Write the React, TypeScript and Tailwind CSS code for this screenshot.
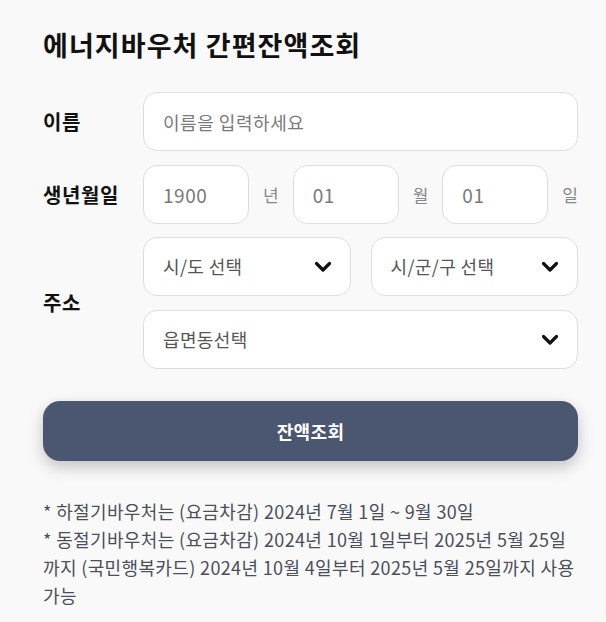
import { useState } from "react";

const FONT = { fontFamily: '"Noto Sans CJK KR", "Noto Sans", sans-serif' };

function Chevron() {
  return (
    <svg width="18" height="12" viewBox="0 0 18 12" className="shrink-0">
      <path d="M2.5 2.5 L9 9 L15.5 2.5" fill="none" stroke="#111" strokeWidth="3.2" strokeLinecap="round" strokeLinejoin="round" />
    </svg>
  );
}

function SelectBox({ label, className = "" }: { label: string; className?: string }) {
  return (
    <button
      type="button"
      className={`flex h-[59px] items-center justify-between rounded-[14px] border border-[#dedede] bg-white pl-[19px] pr-[18px] text-[18px] tracking-[0.02em] text-[#555] ${className}`}
    >
      <span>{label}</span>
      <Chevron />
    </button>
  );
}

export default function App() {
  const [name, setName] = useState("");
  const [year, setYear] = useState("");
  const [month, setMonth] = useState("");
  const [day, setDay] = useState("");

  const inputCls =
    "h-[59px] rounded-[14px] border border-[#dedede] bg-white px-[19px] text-[18px] tracking-[0.03em] text-[#333] placeholder:text-[#7a7a7a] outline-none";

  return (
    <div style={FONT} className="min-h-screen bg-[#f9f9f9] pl-[43px] pr-[28px] pt-[25px] pb-6">
      <h1 className="text-[27px] font-bold leading-[40px] tracking-[0.04em] text-[#111]">
        에너지바우처 간편잔액조회
      </h1>

      <div className="mt-[27px] flex flex-col">
        {/* 이름 */}
        <div className="flex items-center">
          <label className="w-[100px] shrink-0 text-[20px] font-bold tracking-[0.03em] text-[#111]">이름</label>
          <input
            value={name}
            onChange={(e) => setName(e.target.value)}
            placeholder="이름을 입력하세요"
            className={`${inputCls} min-w-0 flex-1`}
          />
        </div>

        {/* 생년월일 */}
        <div className="mt-[14px] flex items-center">
          <label className="w-[100px] shrink-0 text-[20px] font-bold tracking-[0.03em] text-[#111]">생년월일</label>
          <div className="flex flex-1 items-center justify-between text-[17px] text-[#888]">
            <input value={year} onChange={(e) => setYear(e.target.value)} placeholder="1900" className={`${inputCls} w-[106px] text-[19px]`} />
            <span>년</span>
            <input value={month} onChange={(e) => setMonth(e.target.value)} placeholder="01" className={`${inputCls} w-[106px] text-[19px]`} />
            <span>월</span>
            <input value={day} onChange={(e) => setDay(e.target.value)} placeholder="01" className={`${inputCls} w-[106px] text-[19px]`} />
            <span>일</span>
          </div>
        </div>

        {/* 주소 */}
        <div className="mt-[13px] flex items-center">
          <label className="w-[100px] shrink-0 text-[20px] font-bold tracking-[0.03em] text-[#111]">주소</label>
          <div className="flex flex-1 flex-col gap-[14px]">
            <div className="grid grid-cols-2 gap-[20px]">
              <SelectBox label="시/도 선택" />
              <SelectBox label="시/군/구 선택" />
            </div>
            <SelectBox label="읍면동선택" className="w-full" />
          </div>
        </div>
      </div>

      <button
        type="button"
        className="mt-[32px] flex h-[60px] w-full items-center justify-center rounded-[17px] bg-[#4b5670] text-[18px] font-bold tracking-[0.02em] text-white shadow-[0_6px_16px_rgba(0,0,0,0.22)]"
      >
        잔액조회
      </button>

      <div className="mt-[36px] text-[18px] leading-[28px] tracking-[0.02em] text-[#4a4f5c]">
        <p>* 하절기바우처는 (요금차감) 2024년 7월 1일 ~ 9월 30일</p>
        <p>
          * 동절기바우처는 (요금차감) 2024년 10월 1일부터 2025년 5월 25일까지 (국민행복카드) 2024년 10월 4일부터 2025년 5월
          25일까지 사용 가능
        </p>
      </div>
    </div>
  );
}
